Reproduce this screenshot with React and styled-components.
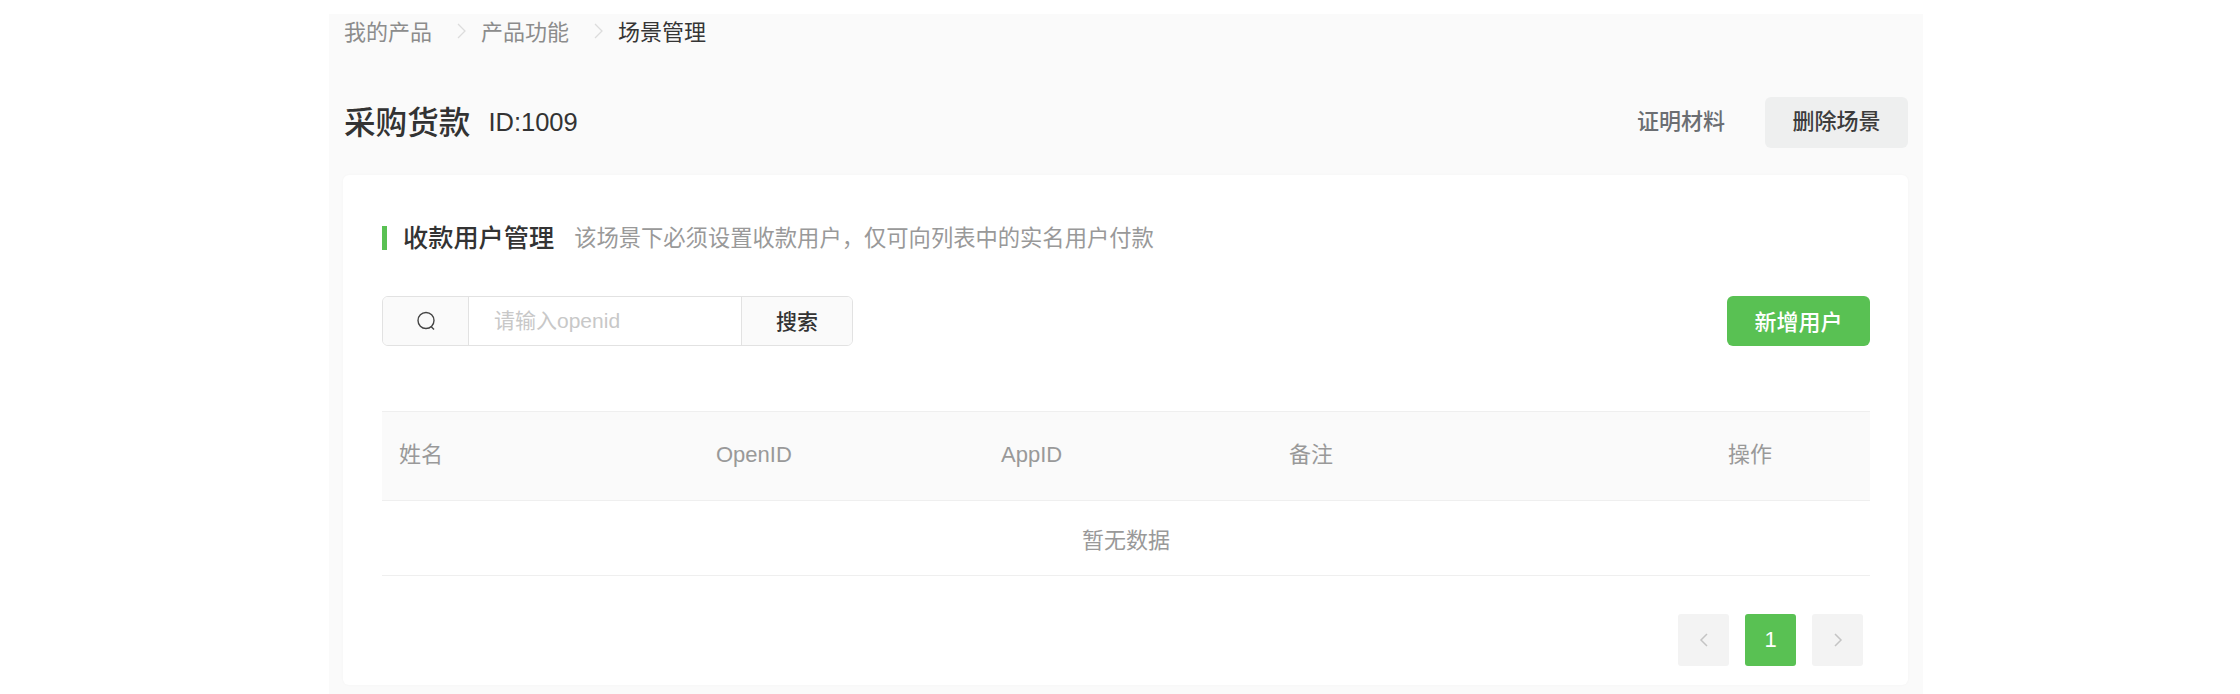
import React from 'react';
import styled, { createGlobalStyle } from 'styled-components';

const GlobalStyle = createGlobalStyle`
  html, body {
    margin: 0;
    padding: 0;
    background: #fff;
    font-family: "Liberation Sans", "Noto Sans CJK SC", sans-serif;
  }
  * { box-sizing: border-box; }
`;

const Panel = styled.div`
  width: 1594px;
  height: 680px;
  margin: 14px 0 0 329px;
  padding: 0 15px 0 14px;
  background: #fafafa;
`;

const Breadcrumb = styled.div`
  display: flex;
  align-items: center;
  height: 36px;
  padding: 0 0 5px 1px;
  font-size: 22px;
`;

const Crumb = styled.span`
  color: ${({ $current }) => ($current ? '#353535' : '#8c8c8c')};
`;

const CrumbArrow = styled.svg`
  width: 12px;
  height: 18px;
  margin: 3px 14px 0 23px;
  fill: none;
  stroke: #dcdcdc;
  stroke-width: 1.3;
`;

const Header = styled.div`
  display: flex;
  align-items: center;
  height: 51px;
  margin-top: 47px;
  padding-left: 1px;
`;

const Title = styled.h1`
  margin: 0 0 5px;
  font-size: 31.6px;
  font-weight: 500;
  color: #333;
`;

const SceneId = styled.span`
  margin-left: 18px;
  font-size: 25.5px;
  color: #333;
`;

const HeaderActions = styled.div`
  display: flex;
  align-items: center;
  margin-left: auto;
`;

const LinkButton = styled.div`
  margin: 0 40px 7px 0;
  font-size: 22px;
  font-weight: 500;
  color: #6b6e72;
`;

const GreyButton = styled.div`
  display: flex;
  align-items: center;
  justify-content: center;
  width: 143px;
  height: 51px;
  padding-bottom: 7px;
  border-radius: 6px;
  background: #eeefef;
  font-size: 22px;
  font-weight: 500;
  color: #3c3c3c;
`;

const Card = styled.div`
  height: 510px;
  margin-top: 27px;
  padding: 48px 38px 19px 39px;
  border-radius: 6px;
  background: #fff;
  box-shadow: 0 0 3px rgba(0, 0, 0, 0.03);
`;

const SectionHead = styled.div`
  display: flex;
  align-items: center;
  height: 30px;
`;

const SectionBar = styled.div`
  width: 5px;
  height: 24px;
  margin-right: 16px;
  background: #59c153;
`;

const SectionTitle = styled.div`
  margin-bottom: 5px;
  font-size: 25.2px;
  font-weight: 500;
  color: #333;
`;

const SectionHint = styled.div`
  margin: 0 0 5px 20px;
  font-size: 22.3px;
  color: #999;
`;

const Toolbar = styled.div`
  display: flex;
  justify-content: space-between;
  margin-top: 43px;
`;

const SearchBox = styled.div`
  display: flex;
  width: 471px;
  height: 50px;
  border: 1px solid #e2e2e2;
  border-radius: 6px;
  overflow: hidden;
`;

const SearchIconCell = styled.div`
  display: flex;
  align-items: center;
  justify-content: center;
  width: 86px;
  background: #fafafa;
  border-right: 1px solid #e2e2e2;
`;

const SearchIcon = styled.svg`
  width: 20px;
  height: 20px;
  fill: none;
  stroke: #444;
  stroke-width: 1.4;
`;

const SearchInput = styled.input`
  flex: 1;
  min-width: 0;
  padding: 0 25px;
  border: 0;
  outline: 0;
  background: #fff;
  font: inherit;
  font-size: 21px;
  color: #333;
  &::placeholder { color: #c8c8c8; }
`;

const SearchButton = styled.div`
  display: flex;
  align-items: center;
  justify-content: center;
  width: 111px;
  padding-bottom: 2px;
  background: #fafafa;
  border-left: 1px solid #e2e2e2;
  font-size: 21px;
  font-weight: 500;
  color: #333;
`;

const GreenButton = styled.div`
  display: flex;
  align-items: center;
  justify-content: center;
  width: 143px;
  height: 50px;
  padding-bottom: 3px;
  border-radius: 6px;
  background: #59c153;
  font-size: 22px;
  font-weight: 500;
  color: #fff;
`;

const TableHead = styled.div`
  display: grid;
  grid-template-columns: 317px 285px 288px 439px 1fr;
  align-items: baseline;
  height: 90px;
  margin-top: 65px;
  padding: 24px 0 0 17px;
  border-top: 1px solid #efefef;
  border-bottom: 1px solid #efefef;
  background: #fafafa;
  font-size: 22px;
  color: #999;
`;

const EmptyRow = styled.div`
  display: flex;
  align-items: center;
  justify-content: center;
  height: 75px;
  border-bottom: 1px solid #efefef;
  font-size: 22px;
  color: #999;
`;

const Pager = styled.div`
  display: flex;
  justify-content: flex-end;
  gap: 16px;
  margin-top: 38px;
  padding-right: 7px;
`;

const PageButton = styled.div`
  display: flex;
  align-items: center;
  justify-content: center;
  width: 51px;
  height: 52px;
  border-radius: 3px;
  background: ${({ $active }) => ($active ? '#59c153' : '#f3f3f3')};
  font-size: 22px;
  color: #fff;
`;

const PageArrow = styled.svg`
  width: 14px;
  height: 18px;
  fill: none;
  stroke: #c4c4c4;
  stroke-width: 1.5;
`;

const columns = ['姓名', 'OpenID', 'AppID', '备注', '操作'];

export default function App() {
  return (
    <>
      <GlobalStyle />
      <Panel>
        <Breadcrumb>
          <Crumb>我的产品</Crumb>
          <CrumbArrow viewBox="0 0 12 18"><path d="M3 2l7 7-7 7" /></CrumbArrow>
          <Crumb>产品功能</Crumb>
          <CrumbArrow viewBox="0 0 12 18"><path d="M3 2l7 7-7 7" /></CrumbArrow>
          <Crumb $current>场景管理</Crumb>
        </Breadcrumb>

        <Header>
          <Title>采购货款</Title>
          <SceneId>ID:1009</SceneId>
          <HeaderActions>
            <LinkButton>证明材料</LinkButton>
            <GreyButton>删除场景</GreyButton>
          </HeaderActions>
        </Header>

        <Card>
          <SectionHead>
            <SectionBar />
            <SectionTitle>收款用户管理</SectionTitle>
            <SectionHint>该场景下必须设置收款用户，仅可向列表中的实名用户付款</SectionHint>
          </SectionHead>

          <Toolbar>
            <SearchBox>
              <SearchIconCell>
                <SearchIcon viewBox="0 0 20 20">
                  <circle cx="10" cy="9.5" r="8" />
                  <path d="M15 15.5l3 3" />
                </SearchIcon>
              </SearchIconCell>
              <SearchInput placeholder="请输入openid" />
              <SearchButton>搜索</SearchButton>
            </SearchBox>
            <GreenButton>新增用户</GreenButton>
          </Toolbar>

          <TableHead>
            {columns.map((name) => (
              <div key={name}>{name}</div>
            ))}
          </TableHead>
          <EmptyRow>暂无数据</EmptyRow>

          <Pager>
            <PageButton>
              <PageArrow viewBox="0 0 14 18"><path d="M10 3L4 9l6 6" /></PageArrow>
            </PageButton>
            <PageButton $active>1</PageButton>
            <PageButton>
              <PageArrow viewBox="0 0 14 18"><path d="M4 3l6 6-6 6" /></PageArrow>
            </PageButton>
          </Pager>
        </Card>
      </Panel>
    </>
  );
}
